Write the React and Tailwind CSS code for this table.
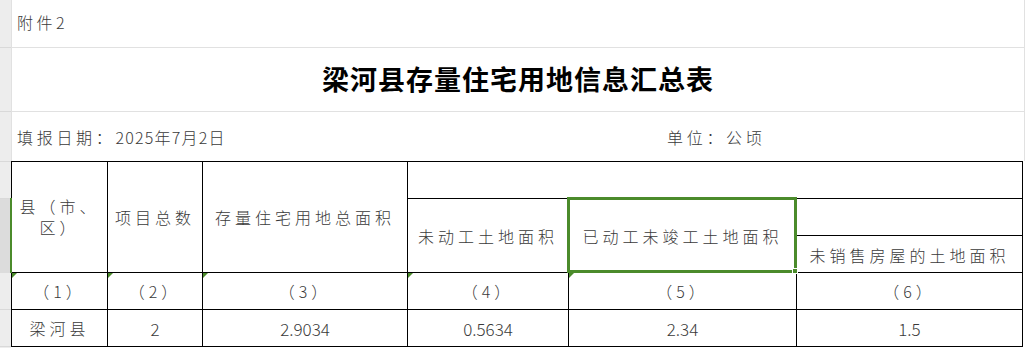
import React from "react";

function Tri() {
  return (
    <span className="absolute left-0 top-0 w-0 h-0 border-t-[5px] border-r-[5px] border-t-[#4b8b2b] border-r-transparent" />
  );
}

export default function App() {
  const cell =
    "border-r border-b border-black flex items-center justify-center text-center";
  const hdr = "text-[16px] tracking-[4px] leading-[21px]";
  const num = "text-[17px] leading-[21px]";
  return (
    <div className="w-[1025px] h-[348px] overflow-hidden bg-white flex font-['Noto_Sans_CJK_SC','Noto_Sans',sans-serif] font-light text-[#3a3a3a]">
      {/* row header column */}
      <div className="w-[11px] shrink-0 flex flex-col bg-[#ededed]">
        <div className="h-[48px] shrink-0 border-b border-[#d9d9d9]" />
        <div className="h-[64px] shrink-0 border-b border-[#d9d9d9]" />
        <div className="h-[50px] shrink-0 border-b border-[#d9d9d9]" />
        <div className="h-[37px] shrink-0 border-b border-[#d9d9d9]" />
        <div className="h-[74px] shrink-0 relative bg-[#dcdcdc]">
          <div className="absolute -top-[1px] bottom-0 -right-[1px] w-[2px] bg-[#4b8b2b] z-10" />
        </div>
        <div className="h-[37px] shrink-0 border-b border-[#d9d9d9]" />
        <div className="h-[37px] shrink-0 border-b border-[#d9d9d9]" />
        <div className="flex-1" />
      </div>

      {/* sheet */}
      <div className="flex-1 flex flex-col">
        <div className="h-[48px] shrink-0 border-l border-r border-b border-[#e1e1e1] flex items-center pl-[5px] pb-[4px] text-[16px] tracking-[3.5px]">
          附件2
        </div>
        <div className="h-[64px] shrink-0 border-l border-r border-b border-[#e1e1e1] flex items-center justify-center text-[27px] font-bold text-black tracking-[1px]">
          梁河县存量住宅用地信息汇总表
        </div>
        <div className="h-[49px] shrink-0 border-l border-r border-[#e1e1e1] flex items-center text-[16px]">
          <div className="w-[655px] shrink-0 pl-[5px]">
            <span className="tracking-[3.7px]">填报日期：</span>
            <span className="tracking-[1.2px]">2025年7月2日</span>
          </div>
          <span className="tracking-[3.7px]">单位：公顷</span>
        </div>

        <div className="w-[1012px] grid grid-cols-[96px_95px_205px_161px_228px_226px] grid-rows-[37px_37px_37px_37px_37px] border-t border-l border-black">
          <div className={`${cell} ${hdr} row-span-3 px-[6px]`}>县（市、区）</div>
          <div className={`${cell} ${hdr} row-span-3`}>项目总数</div>
          <div className={`${cell} ${hdr} row-span-3`}>存量住宅用地总面积</div>
          <div className={`${cell} col-span-3`} />
          <div className={`${cell} ${hdr} row-span-2 pt-[2px]`}>未动工土地面积</div>
          <div className={`${cell} ${hdr} row-span-2 relative pt-[2px]`}>
            已动工未竣工土地面积
            <div className="absolute -left-[2px] -top-[2px] -right-[1px] -bottom-[1px] border-[3px] border-[#4b8b2b] z-10 pointer-events-none">
              <div className="absolute -right-[4px] -bottom-[4px] w-[6px] h-[6px] bg-[#4b8b2b] border border-white" />
            </div>
          </div>
          <div className={`${cell}`} />
          <div className={`${cell} ${hdr} pt-[2px]`}>未销售房屋的土地面积</div>

          <div className={`${cell} ${hdr} relative`}><Tri />（1）</div>
          <div className={`${cell} ${hdr} relative`}><Tri />（2）</div>
          <div className={`${cell} ${hdr} relative`}><Tri />（3）</div>
          <div className={`${cell} ${hdr} relative`}><Tri />（4）</div>
          <div className={`${cell} ${hdr} relative`}><Tri />（5）</div>
          <div className={`${cell} ${hdr}`}>（6）</div>

          <div className={`${cell} text-[16px] tracking-[4px]`}>梁河县</div>
          <div className={`${cell} ${num}`}>2</div>
          <div className={`${cell} ${num}`}>2.9034</div>
          <div className={`${cell} ${num}`}>0.5634</div>
          <div className={`${cell} ${num}`}>2.34</div>
          <div className={`${cell} ${num}`}>1.5</div>
        </div>
      </div>
    </div>
  );
}
